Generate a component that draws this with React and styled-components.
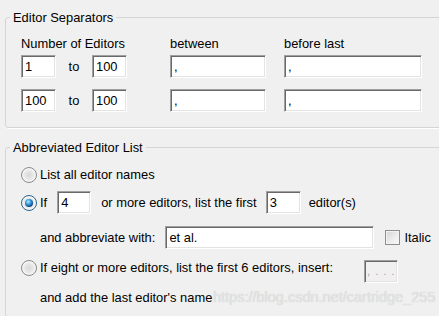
import React from "react";
import styled, { createGlobalStyle, css } from "styled-components";

const GlobalStyle = createGlobalStyle`
  body {
    margin: 0;
    background: #f0f0f0;
    font-family: "Liberation Sans", Arial, sans-serif;
    font-size: 12.9px;
    color: #000;
  }
`;

const Page = styled.div`
  position: relative;
  width: 439px;
  height: 316px;
  overflow: hidden;
  padding: 10px 0 0 5px;
  box-sizing: border-box;
`;

const Group = styled.fieldset`
  margin: 0 0 12px;
  padding: 0;
  width: 460px;
  min-width: 0;
  border: 1px solid #d5d5d5;
  border-radius: 3px;
  box-shadow: 1px 1px 0 #fff;
`;

const Legend = styled.legend`
  margin-left: 4px;
  padding: 0 3px;
  line-height: 15px;
`;

const SepBody = styled.div`
  padding: 11px 0 15px 15px;
  display: grid;
  grid-template-columns: 149px 114px 138px;
  grid-template-rows: 19px 34px 23px;
  align-items: start;
`;

const Label = styled.span`
  line-height: 15px;
  white-space: nowrap;
`;

const Range = styled.div`
  display: flex;
  align-items: center;
`;

const To = styled.span`
  width: 36px;
  text-align: center;
  line-height: 23px;
`;

const Input = styled.div`
  box-sizing: border-box;
  width: ${(p) => p.w}px;
  height: 23px;
  flex: none;
  padding: 0 3px;
  line-height: 21px;
  background: #fff;
  border: 1px solid;
  border-color: #a0a0a0 #fff #fff #a0a0a0;
  box-shadow: inset 1px 1px 0 #696969, inset -1px -1px 0 #e3e3e3;
  white-space: nowrap;
  overflow: hidden;
  ${(p) =>
    p.disabled &&
    css`
      background: #f0f0f0;
      color: #a0a0a0;
      font-size: 11px;
      letter-spacing: 1px;
      padding: 0 2px;
    `}
`;

const ListBody = styled.div`
  padding: 12px 0 10px 15px;
  display: flex;
  flex-direction: column;
`;

const Row = styled.div`
  display: flex;
  align-items: ${(p) => (p.top ? "flex-start" : "center")};
  height: ${(p) => p.h || 23}px;
  margin-top: ${(p) => p.mt || 0}px;
  padding-left: ${(p) => (p.indent ? 19 : 0)}px;
`;

const Text = styled.span`
  line-height: 16px;
  white-space: nowrap;
  margin-left: ${(p) => p.ml || 0}px;
  margin-right: ${(p) => p.mr || 0}px;
`;

const Radio = styled.span`
  position: relative;
  flex: none;
  box-sizing: border-box;
  width: 16px;
  height: 16px;
  margin-right: 3px;
  border-radius: 50%;
  border: 1px solid #8a8a8a;
  background: radial-gradient(circle at 50% 50%, #d8d8d8 0, #e8e8e8 45%, #fbfbfb 75%);
  box-shadow: inset 0 0 0 1px #f4f4f4;
  ${(p) =>
    p.checked &&
    css`
      border-color: #2c628b;
      &::after {
        content: "";
        position: absolute;
        left: 3px;
        top: 3px;
        width: 8px;
        height: 8px;
        border-radius: 50%;
        background: radial-gradient(circle at 40% 35%, #b9ecff 0, #38a0e0 35%, #0e4a86 70%, #08223f 100%);
      }
    `}
`;

const Check = styled.span`
  flex: none;
  box-sizing: border-box;
  width: 15px;
  height: 15px;
  margin: 0 4px 0 11px;
  border: 1px solid #8f8f8f;
  background: linear-gradient(135deg, #d4d4d4 0, #ececec 55%, #fafafa 100%);
  box-shadow: inset 0 0 0 1px #f2f2f2;
`;

const Watermark = styled.div`
  position: absolute;
  left: 213px;
  top: 289px;
  font-size: 14.5px;
  line-height: 16px;
  color: #e4e4e4;
  text-shadow: 0 0 1px #c8c8c8;
  white-space: nowrap;
  pointer-events: none;
`;

export default function App() {
  return (
    <>
      <GlobalStyle />
      <Page>
        <Group>
          <Legend>Editor Separators</Legend>
          <SepBody>
            <Label>Number of Editors</Label>
            <Label>between</Label>
            <Label>before last</Label>

            <Range>
              <Input w={35}>1</Input>
              <To>to</To>
              <Input w={35}>100</Input>
            </Range>
            <Input w={96}>,</Input>
            <Input w={138}>,</Input>

            <Range>
              <Input w={35}>100</Input>
              <To>to</To>
              <Input w={35}>100</Input>
            </Range>
            <Input w={96}>,</Input>
            <Input w={138}>,</Input>
          </SepBody>
        </Group>

        <Group>
          <Legend>Abbreviated Editor List</Legend>
          <ListBody>
            <Row h={16}>
              <Radio />
              <Text>List all editor names</Text>
            </Row>
            <Row mt={8}>
              <Radio checked />
              <Text mr={10}>If</Text>
              <Input w={34}>4</Input>
              <Text ml={10} mr={9}>or more editors, list the first</Text>
              <Input w={35}>3</Input>
              <Text ml={8}>editor(s)</Text>
            </Row>
            <Row mt={12} indent>
              <Text mr={10}>and abbreviate with:</Text>
              <Input w={209}>et al.</Input>
              <Check />
              <Text>Italic</Text>
            </Row>
            <Row mt={11} top>
              <Radio />
              <Text mr={31}>If eight or more editors, list the first 6 editors, insert:</Text>
              <Input w={34} disabled>, . . .</Input>
            </Row>
            <Row mt={7} h={16} indent>
              <Text>and add the last editor's name</Text>
            </Row>
          </ListBody>
        </Group>
        <Watermark>https://blog.csdn.net/cartridge_255</Watermark>
      </Page>
    </>
  );
}
